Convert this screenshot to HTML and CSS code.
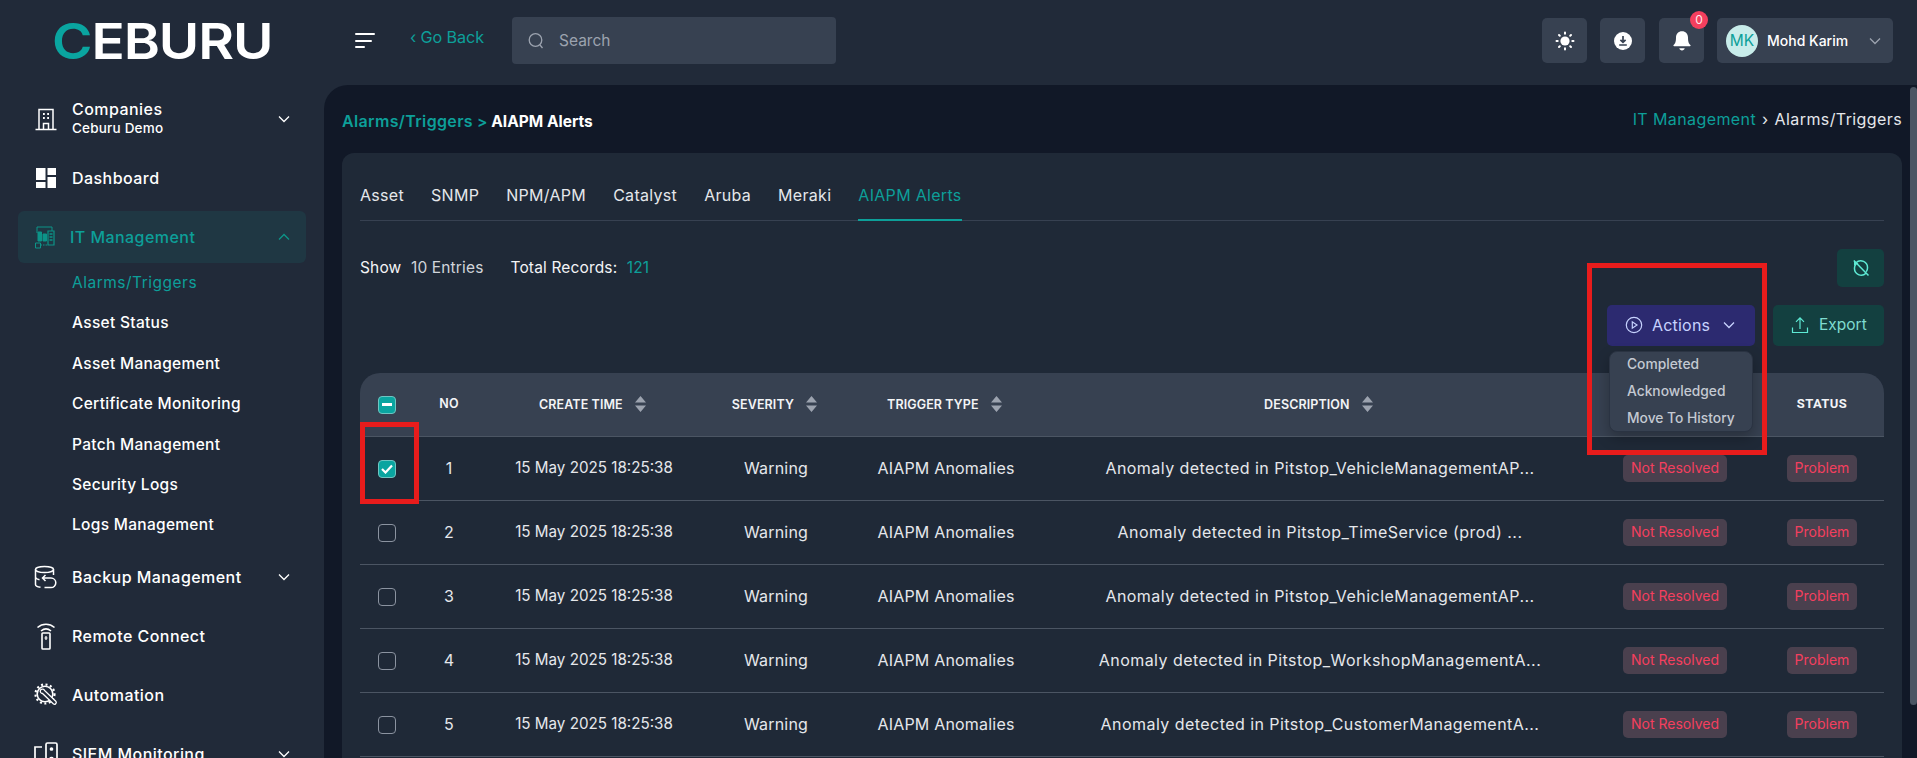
FILE: index.html
```html
<!DOCTYPE html>
<html lang="en">
<head>
<meta charset="utf-8">
<title>AIAPM Alerts</title>
<link rel="stylesheet" href="styles.css">
</head>
<body>
<header class="topbar">
  <div class="logo"><span class="logo-text"><span class="logo-c">C</span>EBURU</span></div>
  <button class="burger" aria-label="Menu"><span class="b1"></span><span class="b2"></span><span class="b3"></span></button>
  <a class="goback">‹ Go Back</a>
  <div class="search">
    <svg class="ic16" viewBox="0 0 16 18" fill="none" stroke="#9ca3af" stroke-width="1.3"><circle cx="7.5" cy="8" r="6.3"/><path d="M12 13l2.5 3"/></svg>
    <span>Search</span>
  </div>
  <div class="top-right">
    <div class="tbtn"><svg width="20" height="20" viewBox="0 0 20 20" fill="#fff"><circle cx="10" cy="10" r="4.6"/><g stroke="#fff" stroke-width="2" stroke-linecap="round"><path d="M10 1.5v1.2M10 17.3v1.2M1.5 10h1.2M17.3 10h1.2M4 4l.8.8M15.2 15.2l.8.8M4 16l.8-.8M15.2 4.8l.8-.8"/></g></svg></div>
    <div class="tbtn tbtn-dl"><svg width="20" height="20" viewBox="0 0 20 20"><circle cx="10" cy="10" r="9" fill="#fff"/><path d="M10 5v6M7.4 8.8L10 11.3l2.6-2.5M6.2 14h7.6" fill="none" stroke="#374151" stroke-width="1.7"/></svg></div>
    <div class="tbtn bell"><svg width="20" height="22" viewBox="0 0 20 22" fill="#fff"><path d="M10 1.2c-3.6 0-6 2.7-6 6.2 0 4.3-.7 6-2.4 7.6-.5.5-.2 1.2.5 1.2h15.8c.7 0 1-.7.5-1.2C16.700 13.400 16 11.700 16 7.400c0-3.500-2.400-6.200-6-6.200z"/><path d="M7.300 18.300h5.400c-.3 1.300-1.300 2.200-2.700 2.200s-2.400-.9-2.700-2.200z"/></svg><span class="badge">0</span></div>
    <div class="user">
      <span class="avatar">MK</span>
      <span class="uname">Mohd Karim</span>
      <svg class="chev" width="12" height="8" viewBox="0 0 12 8" fill="none" stroke="#9ca3af" stroke-width="1.3"><path d="M1 1.500l5 5 5-5"/></svg>
    </div>
  </div>
</header>

<div class="shell">
  <nav class="sidebar">
    <a class="nav">
      <svg class="ico" viewBox="0 0 24 24" fill="none" stroke="#fff" stroke-width="1.500"><path d="M5 22.500V2.500h14v20M1.500 22.500h21"/><path d="M9.500 22.500v-6h5v6" /><path d="M9 7h1.800M13.200 7H15M9 11h1.800M13.200 11H15" stroke-width="2"/></svg>
      <span class="two"><span class="lbl">Companies</span><span class="small">Ceburu Demo</span></span>
      <svg class="chev2" viewBox="0 0 12 8" fill="none" stroke="#fff" stroke-width="1.300"><path d="M1 1.500l5 5 5-5"/></svg>
    </a>
    <a class="nav">
      <svg class="ico" viewBox="0 0 24 24" fill="#fff"><path d="M2 2h9.500v12H2zM13.500 2H22v7h-8.500zM2 16h9.500v6H2zM13.500 11H22v11h-8.500z"/></svg>
      <span class="lbl">Dashboard</span>
    </a>
    <div class="group">
      <a class="nav active">
        <svg class="ico" viewBox="0 0 24 24" fill="#0d9488" stroke="#0d9488"><path d="M3 8V2h15v4" fill="none" stroke-width="1"/><path d="M4 7h3.500v9H4zM9 9h3.500v7H9z" /><path d="M14 6h6v14h-6z" fill="none" stroke-width="1.200"/><path d="M15.500 9h3M15.500 12h3M15.500 15h3" stroke-width="1.500"/><path d="M1.500 18h5v5h-5z" fill="none"/><path d="M6.500 20H14" fill="none" stroke-dasharray="1.500 1"/></svg>
        <span class="lbl">IT Management</span>
        <svg class="chev2" viewBox="0 0 12 8" fill="none" stroke="#0d9488" stroke-width="1.300"><path d="M1 6.500l5-5 5 5"/></svg>
      </a>
      <ul class="sub">
        <li class="cur">Alarms/Triggers</li>
        <li>Asset Status</li>
        <li>Asset Management</li>
        <li>Certificate Monitoring</li>
        <li>Patch Management</li>
        <li>Security Logs</li>
        <li>Logs Management</li>
      </ul>
    </div>
    <a class="nav">
      <svg class="ico" viewBox="0 0 24 24" fill="none" stroke="#fff" stroke-width="1.500"><ellipse cx="10.500" cy="4.500" rx="9" ry="3"/><path d="M1.500 4.500v15c0 1.300 1.800 2.300 5 2.800M19.500 4.500v5.500M1.500 12c0 1.200 1.500 2.200 4 2.700"/><path d="M11.500 10l-3 3 3 3M8.500 13h8.500a4.800 4.800 0 010 9.600h-6.500"/></svg>
      <span class="lbl">Backup Management</span>
      <svg class="chev2" viewBox="0 0 12 8" fill="none" stroke="#fff" stroke-width="1.300"><path d="M1 1.500l5 5 5-5"/></svg>
    </a>
    <a class="nav">
      <svg class="ico tall" viewBox="0 0 24 28" fill="none" stroke="#fff" stroke-width="1.600"><path d="M3.500 5.500c5-4.300 12-4.300 17 0M7 9c3-2.500 7-2.500 10 0"/><rect x="8" y="11" width="8" height="16" rx=".8"/><path d="M12 14v4M10.500 16h3" stroke-width="1.200"/></svg>
      <span class="lbl">Remote Connect</span>
    </a>
    <a class="nav">
      <svg class="ico" viewBox="0 0 24 24" fill="none" stroke="#fff"><circle cx="11" cy="11" r="7.800" stroke-width="1.600"/><circle cx="11" cy="11" r="9.500" stroke-width="2.200" stroke-dasharray="2 2.500"/><path d="M6.500 7c1.500-1.500 3.500-1 4 .5l11.500 11c1 1.500-1 3.500-2.500 2.500L8.500 10.500c-1.500 0-2.800-1.500-2-3.500z" fill="#212a39" stroke-width="1.300"/></svg>
      <span class="lbl">Automation</span>
    </a>
    <a class="nav">
      <svg class="ico" viewBox="0 0 24 24" fill="none" stroke="#fff" stroke-width="1.700"><path d="M8 5H1v17h7"/><rect x="12" y="1" width="11" height="22" rx="1.500"/><circle cx="17.500" cy="7" r="1" fill="#fff"/><circle cx="17.500" cy="17" r="1.500" fill="#fff"/></svg>
      <span class="lbl">SIEM Monitoring</span>
      <svg class="chev2" viewBox="0 0 12 8" fill="none" stroke="#fff" stroke-width="1.300"><path d="M1 1.500l5 5 5-5"/></svg>
    </a>
  </nav>

  <main class="main">
    <div class="crumbs">
      <div class="crumb-left"><span class="teal trail">Alarms/Triggers</span> <span class="teal">&gt;</span> <b>AIAPM Alerts</b></div>
      <div class="crumb-right"><span class="teal">IT Management</span><span class="sep">›</span><span>Alarms/Triggers</span></div>
    </div>

    <section class="card">
      <div class="tabs">
        <a class="tab">Asset</a><a class="tab">SNMP</a><a class="tab">NPM/APM</a><a class="tab">Catalyst</a><a class="tab">Aruba</a><a class="tab">Meraki</a><a class="tab on">AIAPM Alerts</a>
      </div>

      <div class="row-info">
        <div class="info">
          <span class="show">Show <span class="num">10 Entries</span></span>
          <span class="total">Total Records: <span class="teal cnt">121</span></span>
        </div>
        <button class="icon-btn" aria-label="Reset">
          <svg width="18" height="18" viewBox="0 0 18 18" fill="none" stroke="#5eead4" stroke-width="1.500"><path d="M4 3.700A6.800 6.800 0 0115.500 9c0 1.500-.5 2.800-1.300 3.800M14 14.300A6.800 6.800 0 012.500 9c0-1.500.5-2.800 1.300-3.800"/><path d="M1.800 1.500L16.500 16.500"/><path d="M2 1.500v5l4.500-1.800z" fill="#5eead4" stroke="none"/></svg>
        </button>
      </div>

      <div class="row-actions">
        <div class="actions-wrap">
          <button class="btn-actions">
            <svg width="18" height="18" viewBox="0 0 18 18" fill="none" stroke="#c7d2fe" stroke-width="1.200"><circle cx="9" cy="9" r="7.700"/><path d="M7.300 5.800v6.400L12 9z"/></svg>
            <span>Actions</span>
            <svg class="caret" width="12" height="8" viewBox="0 0 12 8" fill="none" stroke="#c7d2fe" stroke-width="1.300"><path d="M1 1.500l5 5 5-5"/></svg>
          </button>
          <ul class="menu">
            <li>Completed</li>
            <li>Acknowledged</li>
            <li>Move To History</li>
          </ul>
        </div>
        <button class="btn-export">
          <svg width="18" height="18" viewBox="0 0 18 18" fill="none" stroke="#5eead4" stroke-width="1.200"><path d="M1.500 11.500v5h15v-5M9 13V2M5 5.800L9 1.800l4 4"/></svg>
          <span>Export</span>
        </button>
      </div>

      <table class="grid">
        <colgroup><col class="c1"><col class="c2"><col class="c3"><col class="c4"><col class="c5"><col class="c6"><col class="c7"><col class="c8"></colgroup>
        <thead>
          <tr>
            <th class="chk"><span class="box on"><span class="dash"></span></span></th>
            <th>NO</th>
            <th class="sh">CREATE TIME <svg class="sort" viewBox="0 0 11 16" fill="#9ca3af"><path d="M5.500 0L11 6.500H0zM5.500 16L0 9.500h11z"/></svg></th>
            <th class="sh">SEVERITY <svg class="sort" viewBox="0 0 11 16" fill="#9ca3af"><path d="M5.500 0L11 6.500H0zM5.500 16L0 9.500h11z"/></svg></th>
            <th class="sh">TRIGGER TYPE <svg class="sort" viewBox="0 0 11 16" fill="#9ca3af"><path d="M5.500 0L11 6.500H0zM5.500 16L0 9.500h11z"/></svg></th>
            <th class="sh">DESCRIPTION <svg class="sort" viewBox="0 0 11 16" fill="#9ca3af"><path d="M5.500 0L11 6.500H0zM5.500 16L0 9.500h11z"/></svg></th>
            <th></th>
            <th class="status-h">STATUS</th>
          </tr>
        </thead>
        <tbody>
          <tr><td class="chk"><span class="box on"><svg width="12" height="10" viewBox="0 0 12 10" fill="none" stroke="#fff" stroke-width="2.200"><path d="M1 5l3.500 3.500L11 1.500"/></svg></span></td><td>1</td><td class="date">15 May 2025 18:25:38</td><td>Warning</td><td>AIAPM Anomalies</td><td class="desc">Anomaly detected in Pitstop_VehicleManagementAP...</td><td><span class="pill">Not Resolved</span></td><td><span class="pill">Problem</span></td></tr>
          <tr><td class="chk"><span class="box"></span></td><td>2</td><td class="date">15 May 2025 18:25:38</td><td>Warning</td><td>AIAPM Anomalies</td><td class="desc">Anomaly detected in Pitstop_TimeService (prod) ...</td><td><span class="pill">Not Resolved</span></td><td><span class="pill">Problem</span></td></tr>
          <tr><td class="chk"><span class="box"></span></td><td>3</td><td class="date">15 May 2025 18:25:38</td><td>Warning</td><td>AIAPM Anomalies</td><td class="desc">Anomaly detected in Pitstop_VehicleManagementAP...</td><td><span class="pill">Not Resolved</span></td><td><span class="pill">Problem</span></td></tr>
          <tr><td class="chk"><span class="box"></span></td><td>4</td><td class="date">15 May 2025 18:25:38</td><td>Warning</td><td>AIAPM Anomalies</td><td class="desc">Anomaly detected in Pitstop_WorkshopManagementA...</td><td><span class="pill">Not Resolved</span></td><td><span class="pill">Problem</span></td></tr>
          <tr><td class="chk"><span class="box"></span></td><td>5</td><td class="date">15 May 2025 18:25:38</td><td>Warning</td><td>AIAPM Anomalies</td><td class="desc">Anomaly detected in Pitstop_CustomerManagementA...</td><td><span class="pill">Not Resolved</span></td><td><span class="pill">Problem</span></td></tr>
        </tbody>
      </table>
    </section>

    <div class="mark mark-actions"></div>
    <div class="mark mark-check"></div>
    <div class="thumb"></div>
  </main>
</div>
</body>
</html>
```

FILE: styles.css
```css
* { box-sizing: border-box; }
html, body { height: 100%; }
body {
  margin: 0;
  overflow: hidden;
  background: #212a39;
  color: #f3f4f6;
  font-family: Inter, "Open Sans", sans-serif;
  font-size: 15px;
  display: flex;
  flex-direction: column;
}
a { color: inherit; text-decoration: none; }
button { font: inherit; border: 0; color: inherit; cursor: pointer; }
ul { list-style: none; margin: 0; padding: 0; }
.teal { color: #0d9f99; }

.topbar { height: 85px; flex: none; display: flex; align-items: center; padding-bottom: 4px; }
.logo {
  width: 355px; padding-left: 52px;
  font-size: 50px; font-weight: 600; line-height: 1; letter-spacing: -1px;
  color: #fff;
}
.logo-text { display: inline-block; transform: scaleX(1.1); transform-origin: left center; }
.logo-c { color: #0aa5a0; }
.burger { width: 20px; height: 15px; padding: 0; background: none; display: flex; flex-direction: column; justify-content: space-between; }
.burger span { display: block; height: 2px; background: #fff; border-radius: 1px; }
.b1 { width: 20px; }
.b2 { width: 17px; }
.b3 { width: 10px; }
.goback { width: 102px; margin-left: 35px; margin-bottom: 7px; color: #0d9f99; font-size: 16.200px; letter-spacing: -.1px; }
.search { width: 324px; height: 47px; background: #374151; border-radius: 4px; display: flex; align-items: center; gap: 15px; padding-left: 16px; color: #9ca3af; font-size: 15.500px; }
.ic16 { width: 16px; height: 18px; }
.top-right { margin-left: auto; padding-right: 24px; display: flex; align-items: center; }
.tbtn { width: 45px; height: 45px; border-radius: 5px; background: #374151; display: flex; align-items: center; justify-content: center; margin-right: 13px; position: relative; }
.tbtn-dl { margin-right: 14px; }
.badge { position: absolute; top: -7px; right: -4px; width: 18px; height: 18px; border-radius: 50%; background: #f43f5e; color: #fde8ec; font-size: 12px; line-height: 18px; text-align: center; }
.user { width: 176px; height: 45px; background: #374151; border-radius: 5px; display: flex; align-items: center; padding: 0 12px 0 9px; }
.avatar { width: 32px; height: 32px; border-radius: 50%; background: #c8ecea; color: #0d9f99; font-size: 15.500px; line-height: 32px; text-align: center; }
.uname { margin-left: 9px; font-size: 14px; font-weight: 500; color: #fff; }
.chev { margin-left: auto; }

.shell { flex: 1; min-height: 0; display: flex; }
.sidebar { width: 324px; flex: none; padding: 8px 18px 0; display: flex; flex-direction: column; gap: 7px; overflow: hidden; }
.nav { height: 52px; flex: none; border-radius: 6px; display: flex; align-items: center; gap: 14px; padding: 0 14px 0 16px; color: #fff; }
.ico { width: 24px; height: 24px; flex: none; }
.ico.tall { height: 28px; }
.lbl { font-size: 16px; font-weight: 500; letter-spacing: .45px; }
.two { display: flex; flex-direction: column; line-height: 19px; }
.small { font-size: 13.500px; font-weight: 500; letter-spacing: .2px; }
.chev2 { width: 12px; height: 8px; margin-left: auto; margin-right: 2px; flex: none; }
.nav.active { background: #1f3743; color: #0d9f99; gap: 12px; }
.sub { padding-left: 54px; margin-bottom: -1.400px; }
.sub li { height: 40.400px; line-height: 40.400px; font-size: 15.500px; font-weight: 500; letter-spacing: .3px; color: #fff; }
.sub li.cur { color: #0d9f99; font-weight: 400; letter-spacing: .5px; }

.main { flex: 1; min-width: 0; position: relative; overflow: hidden; background: #111827; border-top-left-radius: 24px; padding: 0 15px 0 18px; }
.crumbs { height: 68px; display: flex; align-items: center; justify-content: space-between; }
.crumb-left { font-size: 15.500px; font-weight: 600; padding-top: 4px; }
.trail { font-size: 16px; letter-spacing: .35px; }
.crumb-left b { font-weight: 700; color: #fff; }
.crumb-right { font-size: 16px; color: #e5e7eb; letter-spacing: .4px; }
.sep { margin: 0 6px; color: #e5e7eb; }
.card { background: #1f2937; border-radius: 12px 12px 0 0; padding: 0 18px; height: 800px; }
.tabs { height: 68px; display: flex; gap: 27px; border-bottom: 1px solid #374151; }
.tab { padding-top: 29px; line-height: 26px; height: 68px; font-size: 16px; color: #e5e7eb; letter-spacing: .3px; }
.tab.on { color: #0d9f99; border-bottom: 2px solid #0d9f99; }
.row-info { margin-top: 28px; height: 38px; display: flex; align-items: center; justify-content: space-between; }
.info { display: flex; gap: 27px; font-size: 15.500px; letter-spacing: .15px; padding-bottom: 2px; }
.num { margin-left: 5px; color: #d1d5db; }
.cnt { margin-left: 5px; }
.icon-btn { width: 47px; height: 38px; border-radius: 5px; background: #134040; display: flex; align-items: center; justify-content: center; padding: 0; }
.row-actions { margin-top: 18px; display: flex; justify-content: flex-end; gap: 18px; }
.actions-wrap { position: relative; }
.btn-actions { width: 148px; height: 41px; background: #2c2a70; border-radius: 5px; color: #c7d2fe; display: flex; align-items: center; padding: 0 0 2px 18px; font-size: 16px; }
.btn-actions span { margin-left: 9px; letter-spacing: .2px; }
.caret { margin-left: 13px; }
.btn-export { width: 111px; height: 41px; background: #134040; border-radius: 5px; color: #7fdcd0; display: flex; align-items: center; padding: 0 0 2px 18px; font-size: 15.500px; gap: 10px; }
.menu { position: absolute; z-index: 3; top: 46px; left: 2px; width: 144px; height: 81px; background: #374151; border: 1px solid #2a3342; border-radius: 8px; box-shadow: 0 6px 14px rgba(0,0,0,.25); color: #c4c9d2; font-size: 13.800px; font-weight: 500; }
.menu li { height: 27px; line-height: 25px; padding-left: 17px; white-space: nowrap; }

.grid { margin-top: 27px; width: 1524px; table-layout: fixed; border-collapse: separate; border-spacing: 0; }
.c1 { width: 60px; } .c2 { width: 58px; } .c3 { width: 232px; } .c4 { width: 132px; }
.c5 { width: 208px; } .c6 { width: 540px; } .c7 { width: 170px; } .c8 { width: 124px; }
.grid th, .grid td { height: 64px; padding: 0 0 2px; text-align: center; border-bottom: 1px solid #4b5563; }
.grid th { background: #374151; font-size: 12.500px; font-weight: 600; color: #f3f4f6; letter-spacing: .1px; white-space: nowrap; }
.grid th.sh { padding-right: 3px; }
.grid th:first-child { border-top-left-radius: 20px; }
.grid th:last-child { border-top-right-radius: 20px; }
.grid .status-h { font-family: Roboto, sans-serif; font-weight: 700; font-size: 13px; letter-spacing: .4px; }
.grid td { font-size: 16px; letter-spacing: .2px; color: #e5e7eb; white-space: nowrap; }
.grid .date { font-size: 15.200px; letter-spacing: 0; }
.grid .desc { letter-spacing: .45px; }
.grid .chk { text-align: left; padding: 0 0 0 18px; }
.sort { width: 11px; height: 16px; margin-left: 9px; vertical-align: -3px; }
.box { width: 18px; height: 18px; border: 1px solid #8b93a0; border-radius: 4px; display: flex; align-items: center; justify-content: center; }
.box.on { background: #0aa5a0; border-color: #6fc5c2; }
.dash { width: 10px; height: 2.500px; background: #fff; }
.pill { display: inline-block; height: 27px; line-height: 26px; margin-top: 2px; padding: 0 8px; border-radius: 5px; background: #4a404e; color: #f43f5e; font-size: 14px; letter-spacing: 0; }

.mark { position: absolute; border: 5px solid #e81c1c; z-index: 4; pointer-events: none; }
.mark-actions { left: 1263px; top: 178px; width: 180px; height: 192px; }
.mark-check { left: 36px; top: 337px; width: 59px; height: 82px; }
.thumb { position: absolute; right: 0; top: 2px; width: 7px; height: 618px; background: #4b5563; border-radius: 4px; }
```
